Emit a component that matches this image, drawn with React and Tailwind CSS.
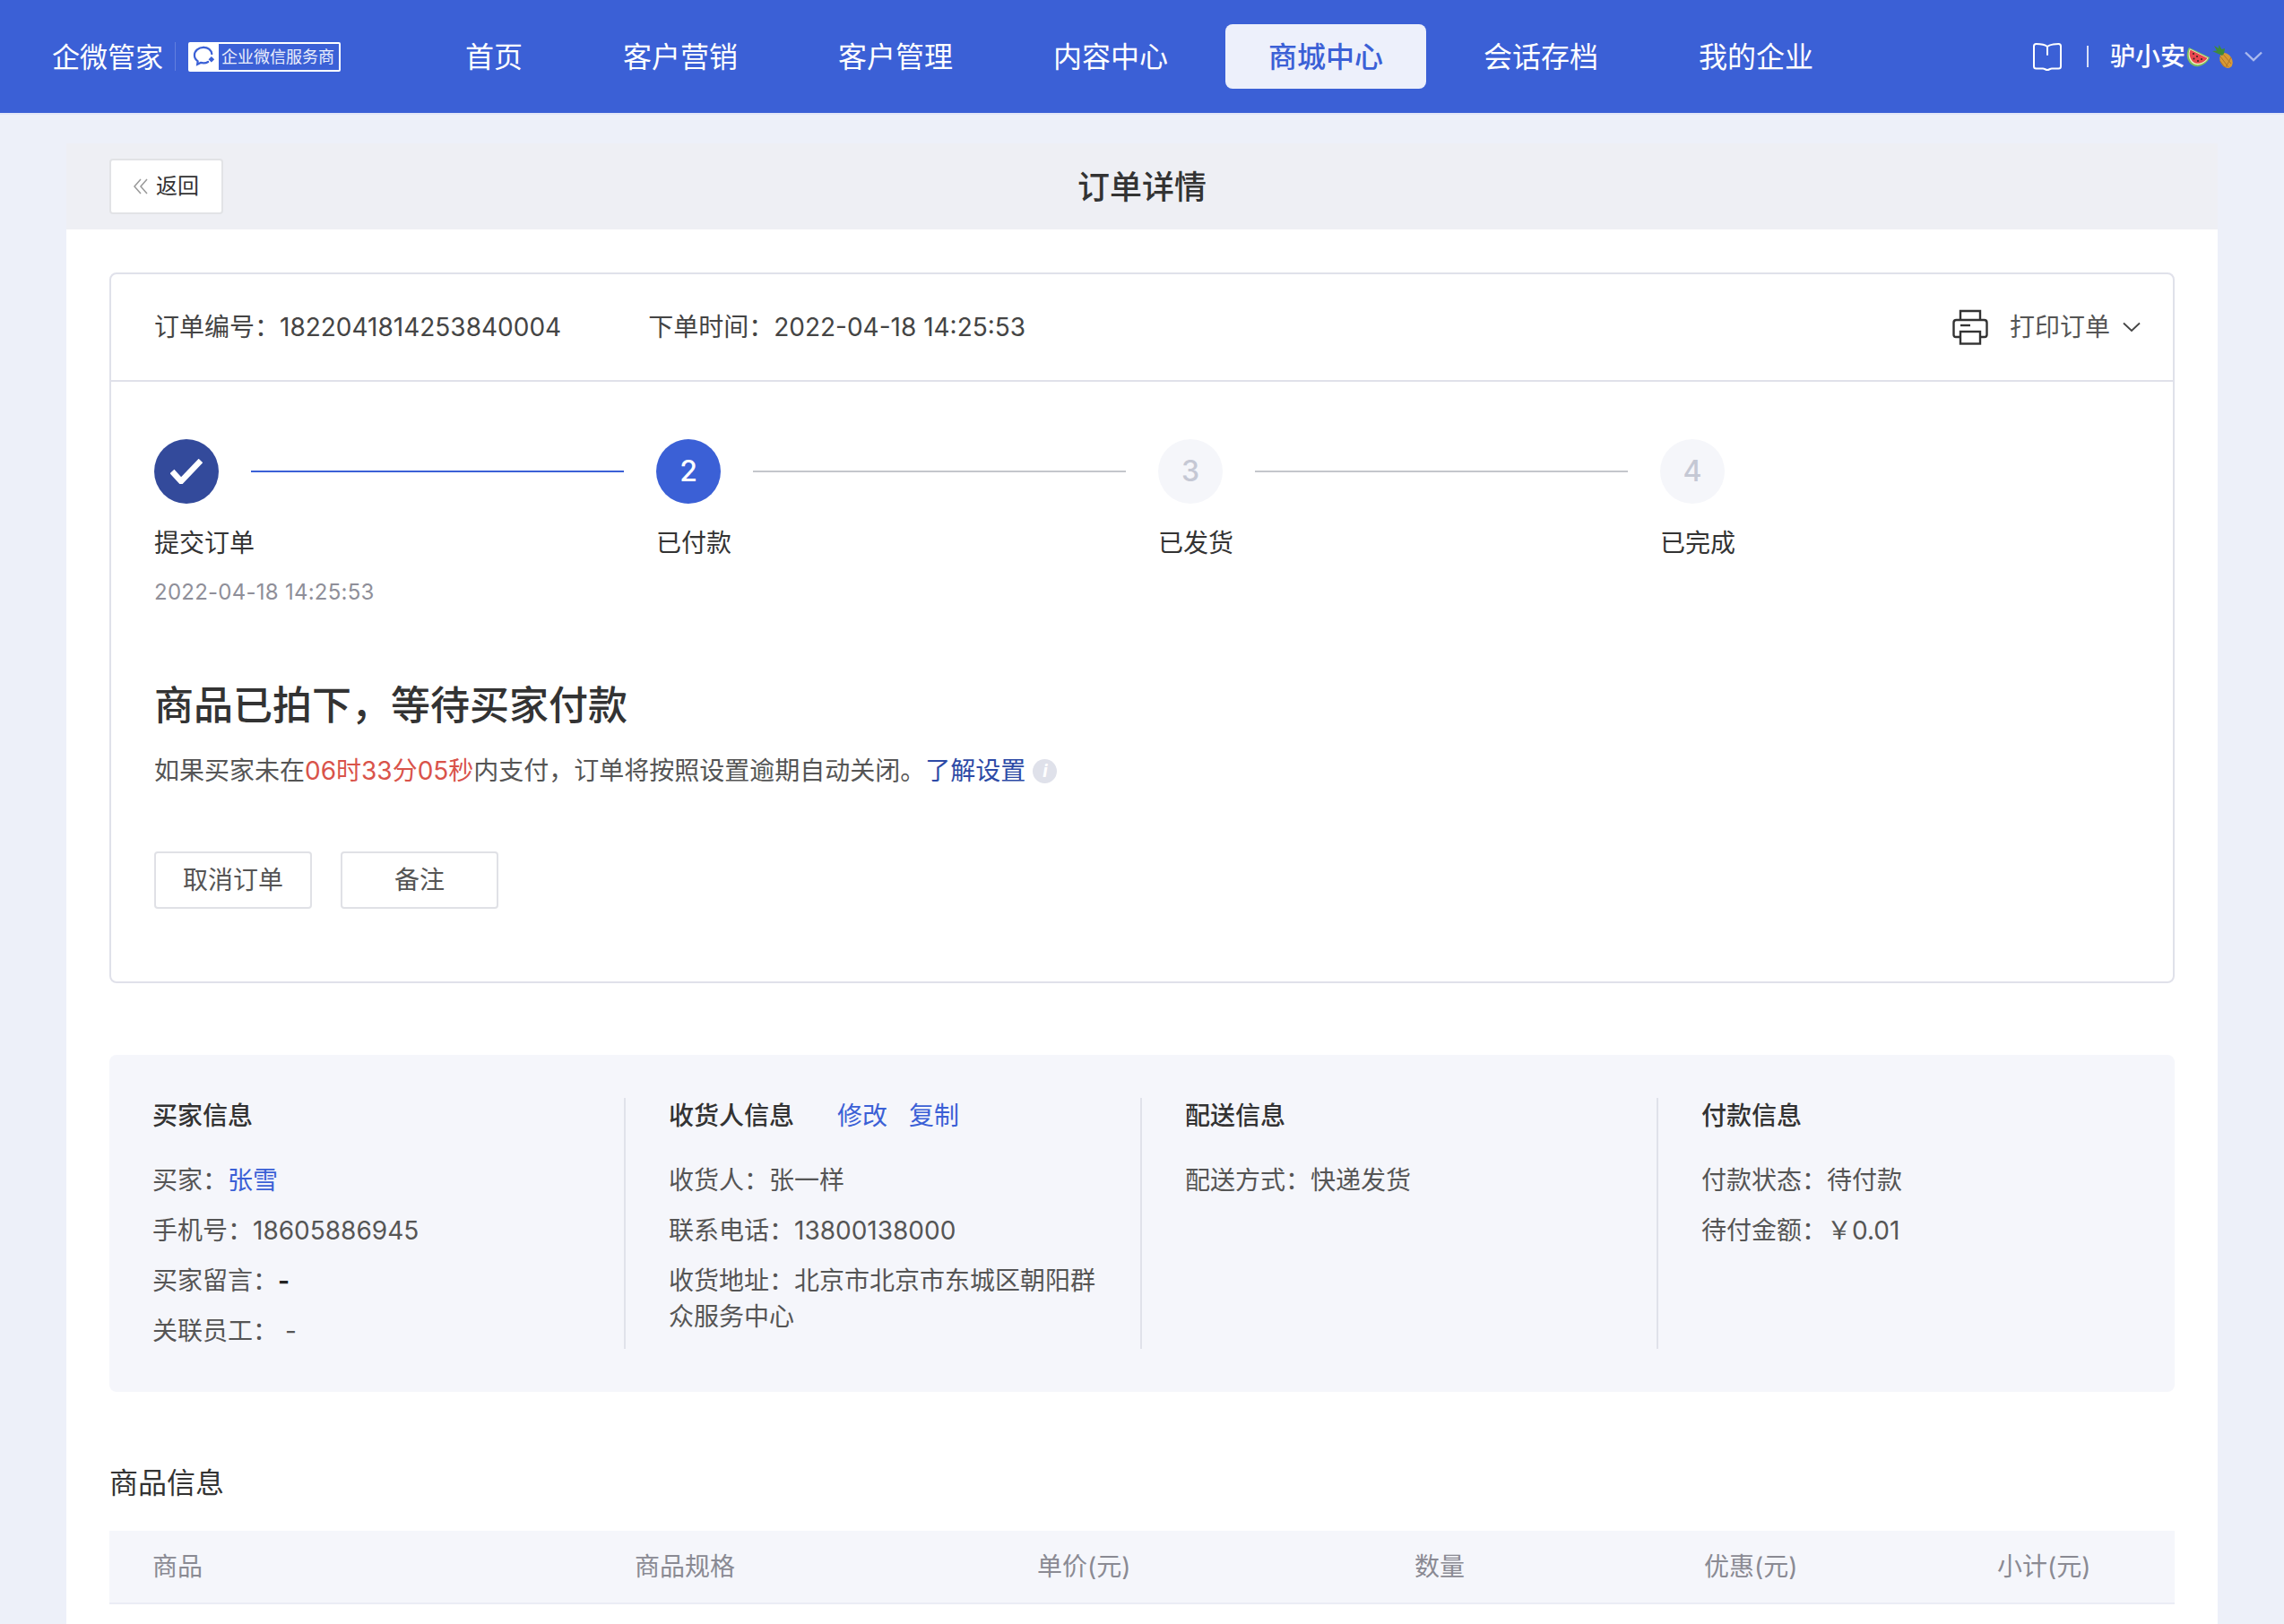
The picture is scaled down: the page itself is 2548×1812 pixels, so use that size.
import React from 'react'

const navItems = ['首页', '客户营销', '客户管理', '内容中心', '商城中心', '会话存档', '我的企业']

const steps = [
  { label: '提交订单', time: '2022-04-18 14:25:53', state: 'done', line: true },
  { label: '已付款', no: 2, state: 'active', line: false },
  { label: '已发货', no: 3, state: 'todo', line: false },
  { label: '已完成', no: 4, state: 'todo', last: true },
]

const Chevron = ({ className, stroke = 'currentColor', width = 2 }) => (
  <svg viewBox="0 0 20 12" fill="none" className={className}>
    <polyline points="1,1.5 10,10 19,1.5" stroke={stroke} strokeWidth={width} />
  </svg>
)

function Logo() {
  return (
    <div className="flex items-center">
      <span className="pt-[2px] text-[31px] leading-[44px] text-white">企微管家</span>
      <span className="ml-[13px] mr-[14px] h-[32px] w-px bg-white/20"></span>
      <div className="flex h-[33px] w-[170px] rounded-[2px] border-2 border-white">
        <div className="flex w-[32px] items-center justify-center bg-white">
          <svg viewBox="0 0 28 26" className="h-[24px] w-[26px]" fill="none">
            <path d="M13 2C7 2 2 6 2 11.500c0 3 1.500 5.500 4 7.300l-.5 3.700 4-2c1.200.3 2.300.5 3.500.5 2 0 4-.5 5.500-1.500" stroke="#3b60d6" strokeWidth="2.400" strokeLinecap="round" />
            <path d="M13 2c5.500 0 9.500 3.500 10 8" stroke="#3b60d6" strokeWidth="2.400" strokeLinecap="round" />
            <rect x="20" y="14" width="5" height="5" transform="rotate(45 22.500 16.500)" fill="#3b60d6" />
          </svg>
        </div>
        <span className="flex-1 pl-[3px] text-[18px] leading-[29px] whitespace-nowrap text-white/90">企业微信服务商</span>
      </div>
    </div>
  )
}

function Watermelon() {
  return (
    <svg viewBox="0 0 27 23" className="h-[23px] w-[27px]">
      <path d="M4 1 L27 12 C25 18 18 23 11 22 C3 20 -1 10 4 1 Z" fill="#7fbf5e" />
      <path d="M5 2.500 L25.500 12.500 C23.500 17 17.500 21 11.500 20 C5 18.500 1.500 10 5 2.500 Z" fill="#eef3c4" />
      <path d="M5.500 3.500 L24.500 12.800 C22.500 16.500 17 19.500 12 18.700 C6.500 17.500 3 10 5.500 3.500 Z" fill="#e8474f" />
      <circle cx="9" cy="8" r="1" fill="#33231f" />
      <circle cx="13" cy="11" r="1" fill="#33231f" />
      <circle cx="9.500" cy="13.500" r="1" fill="#33231f" />
      <circle cx="18" cy="14" r="1" fill="#33231f" />
      <circle cx="14" cy="16" r="1" fill="#33231f" />
    </svg>
  )
}

function Pineapple() {
  return (
    <svg viewBox="0 0 23 27" className="ml-[3px] h-[27px] w-[23px]">
      <ellipse cx="15.500" cy="17.500" rx="6.500" ry="9" transform="rotate(-30 15.500 17.500)" fill="#d99a35" />
      <path d="M9 13 L18 25 M12 10.500 L21 21 M8.500 18 L14 25 M15 25 L21 14" stroke="#a8691f" strokeWidth="0.800" />
      <path d="M11 12 L0 7 L5 6.500 L2 1 L7 4 L7.500 0 L10.500 5 L14 4 L13 10 Z" fill="#3e8a3a" />
    </svg>
  )
}

function Header() {
  return (
    <header className="flex h-[126px] items-center bg-[#3b60d6] pl-[58px] pr-[24px] shadow-[0_2px_0_rgba(59,96,214,0.06)]">
      <Logo />
      <nav className="ml-[91px] flex items-center gap-4">
        {navItems.map((item) => (
          <a
            key={item}
            href="#"
            className={
              item === '商城中心'
                ? 'flex h-[72px] items-center rounded-[8px] bg-[#edf0fb] px-12 pt-[2px] text-[32px] font-medium text-[#3b60d6]'
                : 'flex h-[72px] items-center px-12 pt-[2px] text-[32px] text-white'
            }
          >
            {item}
          </a>
        ))}
      </nav>
      <div className="ml-auto flex items-center">
        <svg viewBox="0 0 32 31" fill="none" className="h-[31px] w-[32px]">
          <path d="M16 4 C13 1.500 9 1 3.500 1 C2 1 1 2 1 3.500 V26 C1 27.500 2 28.500 3.500 28.500 H11 C13 28.500 14 30 16 30 C18 30 19 28.500 21 28.500 H28.500 C30 28.500 31 27.500 31 26 V3.500 C31 2 30 1 28.500 1 C23 1 19 1.500 16 4 Z" stroke="#fff" strokeWidth="2" />
          <path d="M16 4 V13" stroke="#fff" strokeWidth="2" strokeLinecap="round" />
        </svg>
        <span className="ml-[28px] h-[24px] w-[2px] bg-white/80"></span>
        <span className="ml-[24px] text-[28px] font-medium text-white">驴小安</span>
        <Watermelon />
        <Pineapple />
        <Chevron className="ml-[13px] h-[12px] w-[20px]" stroke="#aab9ee" width={2.4} />
      </div>
    </header>
  )
}

function Stepper() {
  return (
    <div className="flex pt-16">
      {steps.map((step) => (
        <div key={step.label} className="w-[560px] shrink-0">
          <div className="flex items-center">
            {step.state === 'done' && (
              <div className="flex size-[72px] items-center justify-center rounded-full bg-[#334a9b]">
                <svg viewBox="0 0 36 28" className="h-[28px] w-[36px]" fill="none">
                  <polyline points="2,14 12,25 34,2" stroke="#fff" strokeWidth="6.500" />
                </svg>
              </div>
            )}
            {step.state === 'active' && (
              <div className="flex size-[72px] items-center justify-center rounded-full bg-[#3b60d6] text-[32px] font-medium text-white">{step.no}</div>
            )}
            {step.state === 'todo' && (
              <div className="flex size-[72px] items-center justify-center rounded-full bg-[#f5f6fa] text-[32px] font-medium text-[#c5c8d4]">{step.no}</div>
            )}
            {!step.last && (
              <div className={step.state === 'done' ? 'mx-9 h-[2px] flex-1 bg-[#3b60d6]' : 'mx-9 h-[2px] flex-1 bg-[#c4c6cc]'}></div>
            )}
          </div>
          <div className="mt-[24px] text-[28px] leading-[40px] text-[#333]">{step.label}</div>
          {step.time && <div className="mt-[17px] text-[24px] leading-[36px] tracking-[0.25px] text-[#8f8f99]">{step.time}</div>}
        </div>
      ))}
    </div>
  )
}

function OrderCard() {
  return (
    <section className="rounded-[8px] border-2 border-[#e0e1ea]">
      <div className="flex h-[120px] items-center border-b-2 border-[#e0e1ea] pl-12 pr-[36px] text-[28px] text-[#444]">
        <span>订单编号：1822041814253840004</span>
        <span className="ml-[97px]">下单时间：2022-04-18 14:25:53</span>
        <div className="ml-auto flex items-center">
          <svg viewBox="0 0 40 40" fill="none" className="size-[40px]">
            <path d="M9 12 V2 H31 V12" stroke="#333" strokeWidth="2.400" />
            <path d="M9 31 H4 C2.500 31 1.500 30 1.500 28.500 V15 C1.500 13 3 12 4.500 12 H35.500 C37 12 38.500 13 38.500 15 V28.500 C38.500 30 37.500 31 36 31 H31" stroke="#333" strokeWidth="2.400" />
            <rect x="9" y="25" width="22" height="13.500" stroke="#333" strokeWidth="2.400" />
            <path d="M9 18 H20" stroke="#333" strokeWidth="2.400" />
          </svg>
          <span className="ml-[24px] text-[#555]">打印订单</span>
          <Chevron className="ml-[14px] h-[12px] w-[20px]" stroke="#444" width={1.800} />
        </div>
      </div>
      <div className="pb-[81px] pl-12">
        <Stepper />
        <h2 className="mt-[78px] text-[44px] leading-[60px] font-medium text-[#333]">商品已拍下，等待买家付款</h2>
        <p className="mt-[23px] flex items-center text-[28px] leading-[40px] text-[#555]">
          如果买家未在<span className="text-[#d9534a]">06时33分05秒</span>内支付，订单将按照设置逾期自动关闭。
          <a href="#" className="text-[#2d4aa6]">了解设置</a>
          <span className="ml-[8px] flex size-[27px] items-center justify-center rounded-full bg-[#dfe1ea] text-[20px] leading-none font-bold text-white italic">i</span>
        </p>
        <div className="mt-[70px] flex gap-8">
          <button className="h-[64px] w-[176px] rounded-[4px] border-2 border-[#e0e1e6] text-[28px] text-[#555]">取消订单</button>
          <button className="h-[64px] w-[176px] rounded-[4px] border-2 border-[#e0e1e6] text-[28px] text-[#555]">备注</button>
        </div>
      </div>
    </section>
  )
}

function InfoCol({ title, extra, children, last }) {
  return (
    <div className={last ? 'h-[280px] w-[576px] px-12' : 'h-[280px] w-[576px] border-r-2 border-[#e0e2ea] px-12'}>
      <div className="flex text-[28px] leading-[40px] font-medium text-[#333]">
        <span>{title}</span>
        {extra}
      </div>
      <div className="mt-8 flex flex-col gap-4 text-[28px] leading-[40px] text-[#555]">{children}</div>
    </div>
  )
}

function InfoPanel() {
  return (
    <section className="mt-20 flex rounded-[8px] bg-[#f5f6fb] py-12">
      <InfoCol title="买家信息">
        <div>买家：<span className="text-[#3b60d6]">张雪</span></div>
        <div>手机号：18605886945</div>
        <div>买家留言：<span className="font-bold text-[#222]">-</span></div>
        <div>关联员工： -</div>
      </InfoCol>
      <InfoCol
        title="收货人信息"
        extra={
          <span className="ml-12 flex gap-6 font-normal text-[#3b60d6]">
            <a href="#">修改</a>
            <a href="#">复制</a>
          </span>
        }
      >
        <div>收货人：张一样</div>
        <div>联系电话：13800138000</div>
        <div>收货地址：北京市北京市东城区朝阳群众服务中心</div>
      </InfoCol>
      <InfoCol title="配送信息">
        <div>配送方式：快递发货</div>
      </InfoCol>
      <InfoCol title="付款信息" last>
        <div>付款状态：待付款</div>
        <div>待付金额：￥0.01</div>
      </InfoCol>
    </section>
  )
}

function GoodsTable() {
  const cols = ['商品', '商品规格', '单价(元)', '数量', '优惠(元)', '小计(元)']
  return (
    <section className="mt-[78px]">
      <h3 className="pt-[2px] text-[32px] leading-[44px] text-[#333]">商品信息</h3>
      <div className="mt-[31px] grid h-[82px] grid-cols-[586px_449px_421px_323px_327px_1fr] items-center border-b-2 border-[#ebedf5] bg-[#f5f6fb] text-[28px] text-[#8a8a93]">
        {cols.map((col, i) => (
          <div key={col} className={i === 0 ? 'pl-12' : ''}>{col}</div>
        ))}
      </div>
    </section>
  )
}

export default function App() {
  return (
    <div className="h-[1812px] overflow-hidden bg-[#edf0f9] font-['Inter','Noto_Sans_CJK_SC',sans-serif]">
      <Header />
      <main className="mx-auto mt-[34px] w-[2400px] bg-white">
        <div className="relative flex h-[96px] items-center justify-center bg-[#eeeff4]">
          <a href="#" className="absolute left-[48px] top-[17px] flex h-[62px] w-[127px] items-center justify-center rounded-[4px] border-2 border-[#e2e3e6] bg-white text-[24px] text-[#333]">
            <svg viewBox="0 0 16 18" fill="none" className="mr-[9px] h-[18px] w-[16px]">
              <path d="M8 1 L1 9 L8 17 M15 1 L8 9 L15 17" stroke="#999" strokeWidth="1.500" />
            </svg>
            返回
          </a>
          <h1 className="pt-[2px] text-[36px] font-medium text-[#333]">订单详情</h1>
        </div>
        <div className="px-12 pt-12 pb-20">
          <OrderCard />
          <InfoPanel />
          <GoodsTable />
        </div>
      </main>
    </div>
  )
}
